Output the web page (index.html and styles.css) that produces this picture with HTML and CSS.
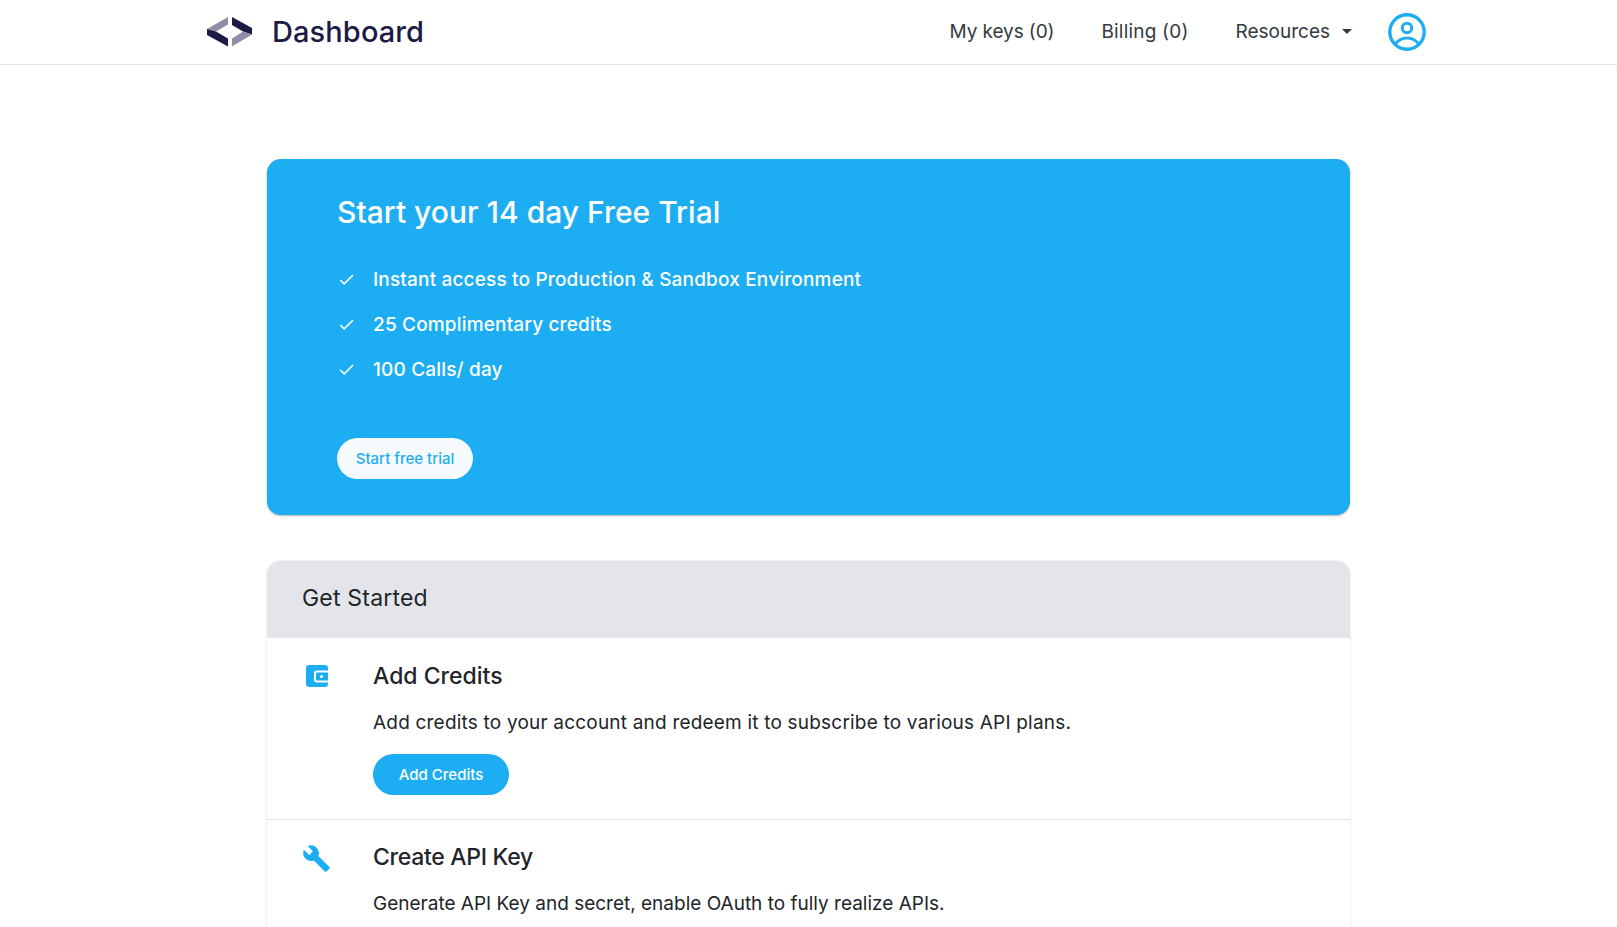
FILE: index.html
```html
<!DOCTYPE html>
<html lang="en">
<head>
<meta charset="utf-8">
<title>Dashboard</title>
<link rel="stylesheet" href="styles.css">
</head>
<body>
<header class="topbar">
  <div class="topbar-inner">
    <a class="brand">
      <svg class="brand-logo" viewBox="0 0 46 30" width="46" height="30">
        <polygon fill="#8e8fa6" points="0,12 21,0 21,7.5 9,14.5"/>
        <polygon fill="#1c1b44" points="0,12 9,14.5 21,21.5 21,29.5 0,18"/>
        <polygon fill="#1c1b44" points="25,0 45,11 45,17.5 36,14.5 25,8"/>
        <polygon fill="#8e8fa6" points="45,17.5 36,14.5 25,21.5 25,29.5"/>
      </svg>
      <span class="brand-name">Dashboard</span>
    </a>
    <nav class="nav">
      <a class="nav-link nav-link-tight">My keys (0)</a>
      <a class="nav-link nav-link-wide">Billing (0)</a>
      <a class="nav-link nav-link-menu">Resources<span class="caret"></span></a>
      <svg class="avatar" viewBox="0 0 38 38" width="38" height="38" fill="none" stroke="#1dadf3" stroke-width="3">
        <circle cx="19" cy="19" r="17.2" stroke-width="3.4"/>
        <circle cx="19" cy="15" r="4.7"/>
        <path d="M7.5 30.5C11 26.5 15 25 19 25C23 25 27 26.5 30.5 30.5"/>
      </svg>
    </nav>
  </div>
</header>
<main class="page">
  <section class="trial">
    <h1 class="trial-title">Start your 14 day Free Trial</h1>
    <ul class="trial-list">
      <li class="trial-item"><svg class="check" viewBox="0 0 24 24"><path d="M9 16.17L4.83 12l-1.42 1.41L9 19 21 7l-1.41-1.41z"/></svg><span>Instant access to Production &amp; Sandbox Environment</span></li>
      <li class="trial-item"><svg class="check" viewBox="0 0 24 24"><path d="M9 16.17L4.83 12l-1.42 1.41L9 19 21 7l-1.41-1.41z"/></svg><span>25 Complimentary credits</span></li>
      <li class="trial-item"><svg class="check" viewBox="0 0 24 24"><path d="M9 16.17L4.83 12l-1.42 1.41L9 19 21 7l-1.41-1.41z"/></svg><span>100 Calls/ day</span></li>
    </ul>
    <a class="pill pill-white">Start free trial</a>
  </section>
  <section class="card">
    <h2 class="card-head">Get Started</h2>
    <div class="step">
      <div class="step-icon">
        <svg class="wallet" viewBox="0 0 22 22" width="22" height="22">
          <rect width="22" height="22" rx="3" fill="#1dadf3"/>
          <path d="M22 6.5H11a2 2 0 0 0-2 2v6a2 2 0 0 0 2 2h11" fill="none" stroke="#fff" stroke-width="2"/>
          <circle cx="15.5" cy="11.5" r="1.5" fill="#fff"/>
        </svg>
      </div>
      <div class="step-body">
        <h3 class="step-title">Add Credits</h3>
        <p class="step-text step-text-wide">Add credits to your account and redeem it to subscribe to various API plans.</p>
        <a class="pill pill-blue">Add Credits</a>
      </div>
    </div>
    <div class="step">
      <div class="step-icon">
        <svg class="wrench" viewBox="0 0 24 24" width="29" height="29"><path fill="#1dadf3" d="M22.7 19l-9.1-9.1c.9-2.3.4-5-1.5-6.9-2-2-5-2.4-7.4-1.3L9 6 6 9 1.6 4.7C.4 7.1.9 10.1 2.9 12.1c1.9 1.9 4.6 2.4 6.9 1.5l9.1 9.1c.4.4 1 .4 1.4 0l2.3-2.3c.5-.4.5-1.1.1-1.4z"/></svg>
      </div>
      <div class="step-body">
        <h3 class="step-title step-title-tight">Create API Key</h3>
        <p class="step-text">Generate API Key and secret, enable OAuth to fully realize APIs.</p>
      </div>
    </div>
  </section>
</main>
</body>
</html>
```
FILE: styles.css
```css
* { box-sizing: border-box; }
html, body { margin: 0; height: 927px; overflow: hidden; background: #fff; }
body { font-family: Inter, "Noto Sans", sans-serif; color: #212529; }
h1, h2, h3, p, ul { margin: 0; padding: 0; }

.topbar { height: 65px; border-bottom: 1px solid #e3e3e6; }
.topbar-inner { height: 64px; padding: 0 191px 0 207px; display: flex; align-items: center; justify-content: space-between; }
.brand { display: flex; align-items: center; gap: 19px; }
.brand-name { font-size: 29px; font-weight: 500; color: #1c1b44; letter-spacing: .1px; padding-bottom: 2px; }
.nav { display: flex; align-items: center; }
.nav-link { font-size: 19px; color: #343a40; margin-right: 47px; padding-bottom: 2px; display: flex; align-items: center; }
.nav-link-tight { letter-spacing: -.1px; }
.nav-link-wide { letter-spacing: .2px; }
.nav-link-menu { margin-right: 36px; }
.caret { width: 0; height: 0; margin-left: 12px; border-left: 5px solid transparent; border-right: 5px solid transparent; border-top: 5px solid #343a40; }

.page { width: 1083px; margin: 94px auto 0; }

.trial { height: 356px; padding: 32px 70px 0; background: #1dadf3; border-radius: 14px; box-shadow: 0 1px 2px rgba(0,0,0,.3); color: #fff; }
.trial-title { font-size: 30px; font-weight: 500; line-height: 42px; }
.trial-list { list-style: none; margin-top: 24px; }
.trial-item { display: flex; align-items: center; height: 45px; font-size: 19px; font-weight: 500; letter-spacing: .17px; }
.check { width: 19px; height: 19px; fill: #fff; margin-right: 17px; }

.pill { display: inline-flex; align-items: center; justify-content: center; width: 136px; height: 41px; border-radius: 21px; font-size: 15px; font-weight: 500; }
.pill-white { margin-top: 46px; background: #f5fbff; color: #1dadf3; }
.pill-blue { margin-top: 15px; background: #1dadf3; color: #fff; }

.card { margin-top: 46px; border-radius: 14px 14px 0 0; box-shadow: 0 0 2px rgba(0,0,0,.2); }
.card-head { height: 77px; padding: 0 0 4px 35px; display: flex; align-items: center; background: #e4e5eb; border-radius: 14px 14px 0 0; font-size: 23px; font-weight: 400; letter-spacing: .2px; }
.step { display: flex; padding: 21px 0 24px; border-bottom: 1px solid #e3e3e6; }
.step + .step { padding-top: 20px; }
.step-icon { width: 106px; padding-left: 35px; padding-top: 6px; }
.wallet { display: block; margin-left: 4px; }
.wrench { display: block; margin-top: -2px; }
.step-title { font-size: 23px; font-weight: 500; line-height: 34px; }
.step-title-tight { letter-spacing: -.3px; }
.step-text { margin-top: 14px; font-size: 19px; line-height: 32px; }
.step-text-wide { letter-spacing: .2px; }
```
